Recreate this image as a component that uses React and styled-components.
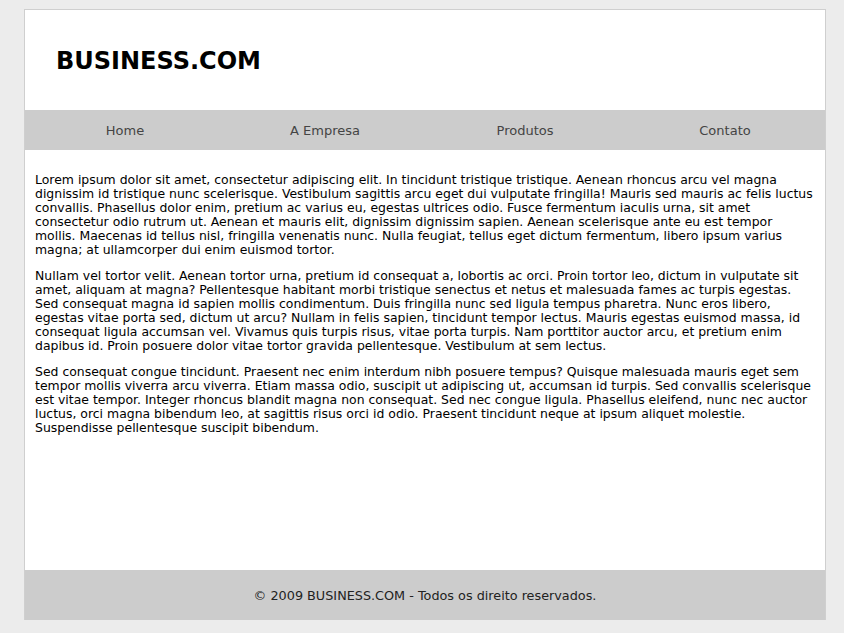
import React from 'react';
import styled, { createGlobalStyle } from 'styled-components';

const GlobalStyle = createGlobalStyle`
  body {
    margin: 0;
    background: #ececec;
    font-family: "DejaVu Sans", Verdana, sans-serif;
  }
`;

const Page = styled.div`
  width: 800px;
  margin: 9px 0 0 24px;
  border: 1px solid #cfcfcf;
  border-bottom: none;
  background: #fff;
`;

const Header = styled.header`
  height: 100px;
  display: flex;
  align-items: center;
  padding-left: 31px;
`;

const Logo = styled.h1`
  margin: 2px 0 0;
  font-size: 24px;
  font-weight: bold;
  color: #000;
`;

const Nav = styled.nav`
  height: 40px;
  background: #cccccc;
  display: grid;
  grid-template-columns: repeat(4, 1fr);
  align-items: center;
`;

const NavLink = styled.a`
  text-align: center;
  font-size: 13px;
  color: #444;
  text-decoration: none;
`;

const Content = styled.main`
  height: 420px;
  box-sizing: border-box;
  padding: 11px 10px 0 10px;

  p {
    margin: 12px 0;
    font-size: 12.45px;
    line-height: 14px;
    color: #000;
  }
`;

const Footer = styled.footer`
  height: 50px;
  background: #cccccc;
  display: flex;
  align-items: center;
  justify-content: center;
  font-size: 12.8px;
  color: #222;
`;

const links = ['Home', 'A Empresa', 'Produtos', 'Contato'];

const paragraphs = [
  'Lorem ipsum dolor sit amet, consectetur adipiscing elit. In tincidunt tristique tristique. Aenean rhoncus arcu vel magna dignissim id tristique nunc scelerisque. Vestibulum sagittis arcu eget dui vulputate fringilla! Mauris sed mauris ac felis luctus convallis. Phasellus dolor enim, pretium ac varius eu, egestas ultrices odio. Fusce fermentum iaculis urna, sit amet consectetur odio rutrum ut. Aenean et mauris elit, dignissim dignissim sapien. Aenean scelerisque ante eu est tempor mollis. Maecenas id tellus nisl, fringilla venenatis nunc. Nulla feugiat, tellus eget dictum fermentum, libero ipsum varius magna; at ullamcorper dui enim euismod tortor.',
  'Nullam vel tortor velit. Aenean tortor urna, pretium id consequat a, lobortis ac orci. Proin tortor leo, dictum in vulputate sit amet, aliquam at magna? Pellentesque habitant morbi tristique senectus et netus et malesuada fames ac turpis egestas. Sed consequat magna id sapien mollis condimentum. Duis fringilla nunc sed ligula tempus pharetra. Nunc eros libero, egestas vitae porta sed, dictum ut arcu? Nullam in felis sapien, tincidunt tempor lectus. Mauris egestas euismod massa, id consequat ligula accumsan vel. Vivamus quis turpis risus, vitae porta turpis. Nam porttitor auctor arcu, et pretium enim dapibus id. Proin posuere dolor vitae tortor gravida pellentesque. Vestibulum at sem lectus.',
  'Sed consequat congue tincidunt. Praesent nec enim interdum nibh posuere tempus? Quisque malesuada mauris eget sem tempor mollis viverra arcu viverra. Etiam massa odio, suscipit ut adipiscing ut, accumsan id turpis. Sed convallis scelerisque est vitae tempor. Integer rhoncus blandit magna non consequat. Sed nec congue ligula. Phasellus eleifend, nunc nec auctor luctus, orci magna bibendum leo, at sagittis risus orci id odio. Praesent tincidunt neque at ipsum aliquet molestie. Suspendisse pellentesque suscipit bibendum.',
];

export default function App() {
  return (
    <>
      <GlobalStyle />
      <Page>
        <Header>
          <Logo>BUSINESS.COM</Logo>
        </Header>
        <Nav>
          {links.map((l) => (
            <NavLink key={l} href="#">{l}</NavLink>
          ))}
        </Nav>
        <Content>
          {paragraphs.map((p, i) => (
            <p key={i}>{p}</p>
          ))}
        </Content>
        <Footer>© 2009 BUSINESS.COM - Todos os direito reservados.</Footer>
      </Page>
    </>
  );
}
